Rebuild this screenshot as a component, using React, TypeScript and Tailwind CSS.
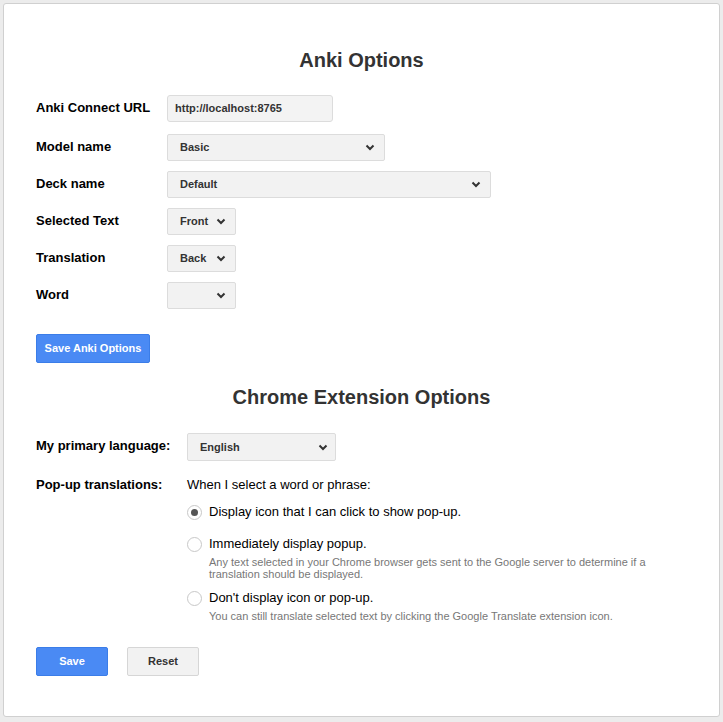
import type { ReactNode } from "react";

function Chevron() {
  return (
    <svg width="10" height="7" viewBox="0 0 10 7" className="shrink-0">
      <path d="M1.5 1.5 L5 5 L8.5 1.5" fill="none" stroke="#333" strokeWidth="2" />
    </svg>
  );
}

function FakeSelect({ value, width }: { value: string; width: string }) {
  return (
    <div
      className={`${width} h-[27px] flex items-center justify-between pl-[12px] pr-[9px] bg-[#f2f2f2] border border-[#dcdcdc] rounded-[2px] text-[11px] font-bold text-[#333]`}
    >
      <span>{value}</span>
      <Chevron />
    </div>
  );
}

function Row({ label, children }: { label: string; children: ReactNode }) {
  return (
    <div className="flex items-center h-[27px]">
      <div className="w-[131px] text-[13px] font-bold text-black -mt-[1px]">{label}</div>
      {children}
    </div>
  );
}

function Radio({ checked }: { checked?: boolean }) {
  return (
    <div className="w-[15px] h-[15px] rounded-full border border-[#c8c8c8] bg-white flex items-center justify-center shrink-0">
      {checked && <div className="w-[7px] h-[7px] rounded-full bg-[#555]" />}
    </div>
  );
}

function Option({ label, desc, checked }: { label: string; desc?: string; checked?: boolean }) {
  return (
    <div>
      <div className="flex items-center gap-[7px] h-[18px]">
        <Radio checked={checked} />
        <span className="text-[13px] text-black">{label}</span>
      </div>
      {desc && (
        <div className="ml-[22px] mt-[3px] text-[11px] leading-[12px] text-[#777] max-w-[450px]">{desc}</div>
      )}
    </div>
  );
}

export default function App() {
  return (
    <div className="min-h-[722px] bg-[#ececec] p-[3px] font-['Liberation_Sans',Arial,sans-serif]">
      <div className="bg-white border border-[#d0d0d0] rounded-[3px] h-[714px] pl-[32px] pr-[32px]">
        <h1 className="text-center text-[20px] font-bold text-[#333] pt-[45px] leading-[23px]">Anki Options</h1>

        <div className="mt-[23px] flex flex-col gap-[10px]">
          <Row label="Anki Connect URL">
            <div className="w-[166px] h-[27px] flex items-center pl-[7px] bg-[#f3f3f3] border border-[#dcdcdc] rounded-[3px] text-[11px] font-bold text-[#333]">
              http://localhost:8765
            </div>
          </Row>
          <div className="mt-[2px]">
            <Row label="Model name">
              <FakeSelect value="Basic" width="w-[218px]" />
            </Row>
          </div>
          <Row label="Deck name">
            <FakeSelect value="Default" width="w-[324px]" />
          </Row>
          <Row label="Selected Text">
            <FakeSelect value="Front" width="w-[69px]" />
          </Row>
          <Row label="Translation">
            <FakeSelect value="Back" width="w-[69px]" />
          </Row>
          <Row label="Word">
            <FakeSelect value="" width="w-[69px]" />
          </Row>
        </div>

        <button className="mt-[25px] w-[114px] h-[29px] bg-[#4a8af4] border border-[#3b7de8] rounded-[2px] text-white text-[11px] font-bold">
          Save Anki Options
        </button>

        <h2 className="text-center text-[20px] font-bold text-[#333] mt-[23px] leading-[23px]">
          Chrome Extension Options
        </h2>

        <div className="mt-[24px] flex items-center h-[28px]">
          <div className="w-[151px] text-[13px] font-bold text-black -mt-[2px]">My primary language:</div>
          <div className="w-[149px] h-[28px] flex items-center justify-between pl-[12px] pr-[7px] bg-[#f2f2f2] border border-[#dcdcdc] rounded-[2px] text-[11px] font-bold text-[#333]">
            <span>English</span>
            <Chevron />
          </div>
        </div>

        <div className="mt-[15px] flex">
          <div className="w-[151px] text-[13px] leading-[18px] font-bold text-black">Pop-up translations:</div>
          <div>
            <div className="text-[13px] leading-[18px] text-black">When I select a word or phrase:</div>
            <div className="mt-[9px] flex flex-col gap-[14px]">
              <Option label="Display icon that I can click to show pop-up." checked />
              <div className="flex flex-col gap-[9px]">
                <Option
                  label="Immediately display popup."
                  desc="Any text selected in your Chrome browser gets sent to the Google server to determine if a translation should be displayed."
                />
                <Option
                  label="Don't display icon or pop-up."
                  desc="You can still translate selected text by clicking the Google Translate extension icon."
                />
              </div>
            </div>
          </div>
        </div>

        <div className="mt-[25px] flex gap-[19px]">
          <button className="w-[72px] h-[29px] bg-[#4a8af4] border border-[#3b7de8] rounded-[2px] text-white text-[11px] font-bold">
            Save
          </button>
          <button className="w-[72px] h-[29px] bg-[#f2f2f2] border border-[#d6d6d6] rounded-[2px] text-[#333] text-[11px] font-bold">
            Reset
          </button>
        </div>
      </div>
    </div>
  );
}
